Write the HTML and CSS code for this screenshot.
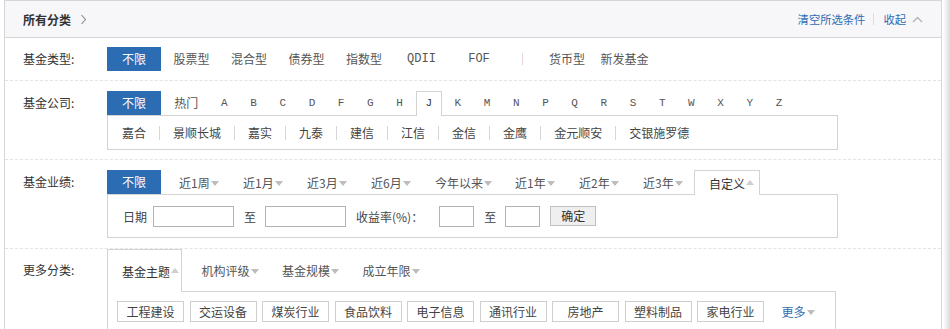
FILE: index.html
```html
<!DOCTYPE html>
<html lang="zh-CN">
<head>
<meta charset="utf-8">
<title>所有分类</title>
<link rel="stylesheet" href="styles.css">
</head>
<body>
<div class="panel">
  <div class="head">
    <div class="head-left">
      <span class="title">所有分类</span>
      <svg class="chev-right" width="7" height="11" viewBox="0 0 7 11"><path d="M1.5 1 L5.5 5.5 L1.5 10" fill="none" stroke="#8a8a8a" stroke-width="1.1"/></svg>
    </div>
    <div class="head-right">
      <a class="link">清空所选条件</a>
      <span class="vsep"></span>
      <a class="link">收起</a>
      <svg class="chev-up" width="11" height="7" viewBox="0 0 11 7"><path d="M1 6 L5.5 1.5 L10 6" fill="none" stroke="#b4b4b4" stroke-width="1.4"/></svg>
    </div>
  </div>

  <div class="row row-type">
    <div class="label">基金类型:</div>
    <div class="opts">
      <span class="opt on">不限</span>
      <span class="opt">股票型</span>
      <span class="opt">混合型</span>
      <span class="opt">债券型</span>
      <span class="opt">指数型</span>
      <span class="opt mono">QDII</span>
      <span class="opt mono">FOF</span>
      <span class="divider"></span>
      <span class="opt">货币型</span>
      <span class="opt">新发基金</span>
    </div>
  </div>

  <div class="row row-company">
    <div class="label">基金公司:</div>
    <div class="body">
      <div class="tabs letters">
        <span class="opt on">不限</span>
        <span class="hot">热门</span>
        <span class="letter">A</span>
        <span class="letter">B</span>
        <span class="letter">C</span>
        <span class="letter">D</span>
        <span class="letter">F</span>
        <span class="letter">G</span>
        <span class="letter">H</span>
        <span class="letter tab-active">J</span>
        <span class="letter">K</span>
        <span class="letter">M</span>
        <span class="letter">N</span>
        <span class="letter">P</span>
        <span class="letter">Q</span>
        <span class="letter">R</span>
        <span class="letter">S</span>
        <span class="letter">T</span>
        <span class="letter">W</span>
        <span class="letter">X</span>
        <span class="letter">Y</span>
        <span class="letter">Z</span>
      </div>
      <div class="box company-box">
        <span class="co">嘉合</span>
        <span class="co">景顺长城</span>
        <span class="co">嘉实</span>
        <span class="co">九泰</span>
        <span class="co">建信</span>
        <span class="co">江信</span>
        <span class="co">金信</span>
        <span class="co">金鹰</span>
        <span class="co">金元顺安</span>
        <span class="co">交银施罗德</span>
      </div>
    </div>
  </div>

  <div class="row row-perf">
    <div class="label">基金业绩:</div>
    <div class="body">
      <div class="tabs">
        <span class="opt on">不限</span>
        <span class="ptab first">近1周<i class="tri-down"></i></span>
        <span class="ptab">近1月<i class="tri-down"></i></span>
        <span class="ptab">近3月<i class="tri-down"></i></span>
        <span class="ptab">近6月<i class="tri-down"></i></span>
        <span class="ptab wide">今年以来<i class="tri-down"></i></span>
        <span class="ptab">近1年<i class="tri-down"></i></span>
        <span class="ptab">近2年<i class="tri-down"></i></span>
        <span class="ptab">近3年<i class="tri-down"></i></span>
        <span class="ptab tab-active custom">自定义<i class="tri-up"></i></span>
      </div>
      <div class="box custom-box">
        <span class="f-label">日期</span>
        <span class="inp inp-date"></span>
        <span class="f-to">至</span>
        <span class="inp inp-date"></span>
        <span class="f-rate">收益率(%)：</span>
        <span class="inp inp-num"></span>
        <span class="f-to">至</span>
        <span class="inp inp-num"></span>
        <span class="btn">确定</span>
      </div>
    </div>
  </div>

  <div class="row row-more">
    <div class="label">更多分类:</div>
    <div class="body">
      <div class="tabs">
        <span class="mtab tab-active">基金主题<i class="tri-up"></i></span>
        <span class="mtab">机构评级<i class="tri-down"></i></span>
        <span class="mtab">基金规模<i class="tri-down"></i></span>
        <span class="mtab">成立年限<i class="tri-down"></i></span>
      </div>
      <div class="box more-box">
        <span class="tag">工程建设</span>
        <span class="tag">交运设备</span>
        <span class="tag">煤炭行业</span>
        <span class="tag">食品饮料</span>
        <span class="tag">电子信息</span>
        <span class="tag">通讯行业</span>
        <span class="tag">房地产</span>
        <span class="tag">塑料制品</span>
        <span class="tag">家电行业</span>
        <span class="more">更多<i class="tri-down"></i></span>
      </div>
    </div>
  </div>
</div>
</body>
</html>
```

FILE: styles.css
```css
html {
  background: linear-gradient(to right, #ffffff 0, #ffffff 943px, #dcdcdc 950px);
  overflow: hidden;
}
body {
  margin: 0;
  height: 329px;
  overflow: hidden;
  font-family: "Noto Sans CJK SC", "Noto Sans", sans-serif;
  font-size: 12px;
  color: #444;
}
.panel {
  margin-left: 4px;
  width: 938px;
  box-sizing: border-box;
  border: 1px solid #d6d6d6;
  border-bottom: none;
  background: #fff;
}
.head {
  height: 36px;
  border-bottom: 1px solid #d6d6d6;
  background: #f7f7f9;
  display: flex;
  align-items: center;
  justify-content: space-between;
  padding: 0 18px 0 18px;
}
.head-left {
  display: flex;
  align-items: center;
}
.title {
  font-weight: bold;
  color: #333;
  font-size: 12px;
}
.chev-right {
  margin-left: 9px;
}
.head-right {
  display: flex;
  align-items: center;
}
.link {
  color: #2f6cb3;
  font-size: 11.3px;
  cursor: pointer;
}
.vsep {
  width: 1px;
  height: 12px;
  background: #dcdcdc;
  margin: 0 9px 0 8px;
}
.chev-up {
  margin-left: 6px;
}

.row {
  display: flex;
  border-bottom: 1px dashed #e3e3e3;
}
.row-type { padding: 9px 0; }
.row-company { padding: 10px 0 9px; }
.row-perf { padding: 10px 0 10px; }
.row-more { padding: 0; border-bottom: none; }

.label {
  width: 102px;
  box-sizing: border-box;
  padding-left: 18px;
  line-height: 24px;
  color: #333;
  flex: none;
}
.row-more .label { line-height: 42px; }

.opts {
  display: flex;
  align-items: center;
  gap: 3.5px;
  height: 24px;
}
.opt {
  width: 54px;
  height: 24px;
  line-height: 24px;
  text-align: center;
  color: #555;
  flex: none;
}
.opt.on {
  background: #2b6cb3;
  color: #fff;
}
.mono {
  font-family: "Liberation Mono", "DejaVu Sans Mono", monospace;
  font-size: 12px;
}
.divider {
  width: 1px;
  height: 12px;
  background: #e9d6db;
  margin: 0 14px 0 12px;
}

.body {
  display: flex;
  flex-direction: column;
}
.tabs {
  display: flex;
  align-items: flex-start;
}
.letters {
  gap: 3.2px;
}
.hot {
  width: 44px;
  height: 24px;
  line-height: 24px;
  text-align: center;
  color: #555;
}
.letter {
  width: 26px;
  height: 24px;
  line-height: 24px;
  text-align: center;
  font-family: "Liberation Mono", "DejaVu Sans Mono", monospace;
  font-size: 11px;
  color: #555;
  box-sizing: border-box;
}
.tab-active {
  position: relative;
  z-index: 1;
  background: #fff;
  border: 1px solid #d3d3d3;
  border-bottom: none;
  box-sizing: border-box;
  margin-bottom: -1px;
}
.letter.tab-active {
  height: 25px;
  line-height: 23px;
  color: #333;
}

.box {
  border: 1px solid #d3d3d3;
  box-sizing: border-box;
  background: #fff;
}
.company-box {
  width: 731px;
  height: 35px;
  display: flex;
  align-items: center;
  padding-left: 1px;
}
.co {
  padding: 0 13px;
  line-height: 14px;
  color: #444;
  border-left: 1px solid #d6d6d6;
}
.co:first-child {
  border-left: none;
}

.ptab {
  width: 64px;
  height: 24px;
  box-sizing: border-box;
  padding-left: 13px;
  display: flex;
  align-items: center;
  color: #555;
  flex: none;
}
.ptab.first { margin-left: 5px; }
.ptab.wide { width: 80px; }
.ptab.custom {
  width: 66px;
  height: 25px;
  padding-left: 14px;
  color: #333;
}
.tri-down, .tri-up {
  display: inline-block;
  width: 0;
  height: 0;
  border-left: 4.5px solid transparent;
  border-right: 4.5px solid transparent;
  margin-left: 1px;
  flex: none;
}
.tri-down {
  border-top: 5px solid #bdbdbd;
  margin-top: 2px;
}
.tri-up {
  border-bottom: 5px solid #cfcfcf;
  margin-top: -2px;
}

.custom-box {
  width: 731px;
  height: 44px;
  display: flex;
  align-items: center;
  padding-left: 15px;
}
.f-label {
  color: #444;
  flex: none;
  margin-right: 6px;
}
.inp {
  height: 21px;
  box-sizing: border-box;
  border: 1px solid #b2b2b2;
  background: #fff;
  flex: none;
}
.inp-date { width: 81px; }
.inp-num { width: 35px; }
.f-to {
  width: 12px;
  flex: none;
  margin: 0 9px 0 10px;
  color: #444;
}
.f-rate {
  flex: none;
  margin-left: 10px;
  margin-right: 16px;
  color: #444;
}
.btn {
  width: 46px;
  height: 20px;
  box-sizing: border-box;
  border: 1px solid #c0c0c0;
  background: #efefef;
  color: #333;
  text-align: center;
  line-height: 18px;
  margin-left: 10px;
  flex: none;
}

.mtab {
  width: 75px;
  height: 42px;
  box-sizing: border-box;
  padding-left: 14px;
  margin-right: 5.5px;
  display: flex;
  align-items: center;
  color: #555;
  flex: none;
}
.mtab.tab-active {
  height: 43px;
  color: #333;
}
.more-box {
  width: 729px;
  height: 60px;
  display: flex;
  align-items: flex-start;
  gap: 5.5px;
  padding: 9px 0 0 9px;
}
.tag {
  width: 67px;
  height: 21px;
  box-sizing: border-box;
  border: 1px solid #cfcfcf;
  text-align: center;
  line-height: 19px;
  color: #444;
  flex: none;
}
.more {
  margin-left: 12px;
  height: 21px;
  display: flex;
  align-items: center;
  color: #2f6cb3;
}
```
